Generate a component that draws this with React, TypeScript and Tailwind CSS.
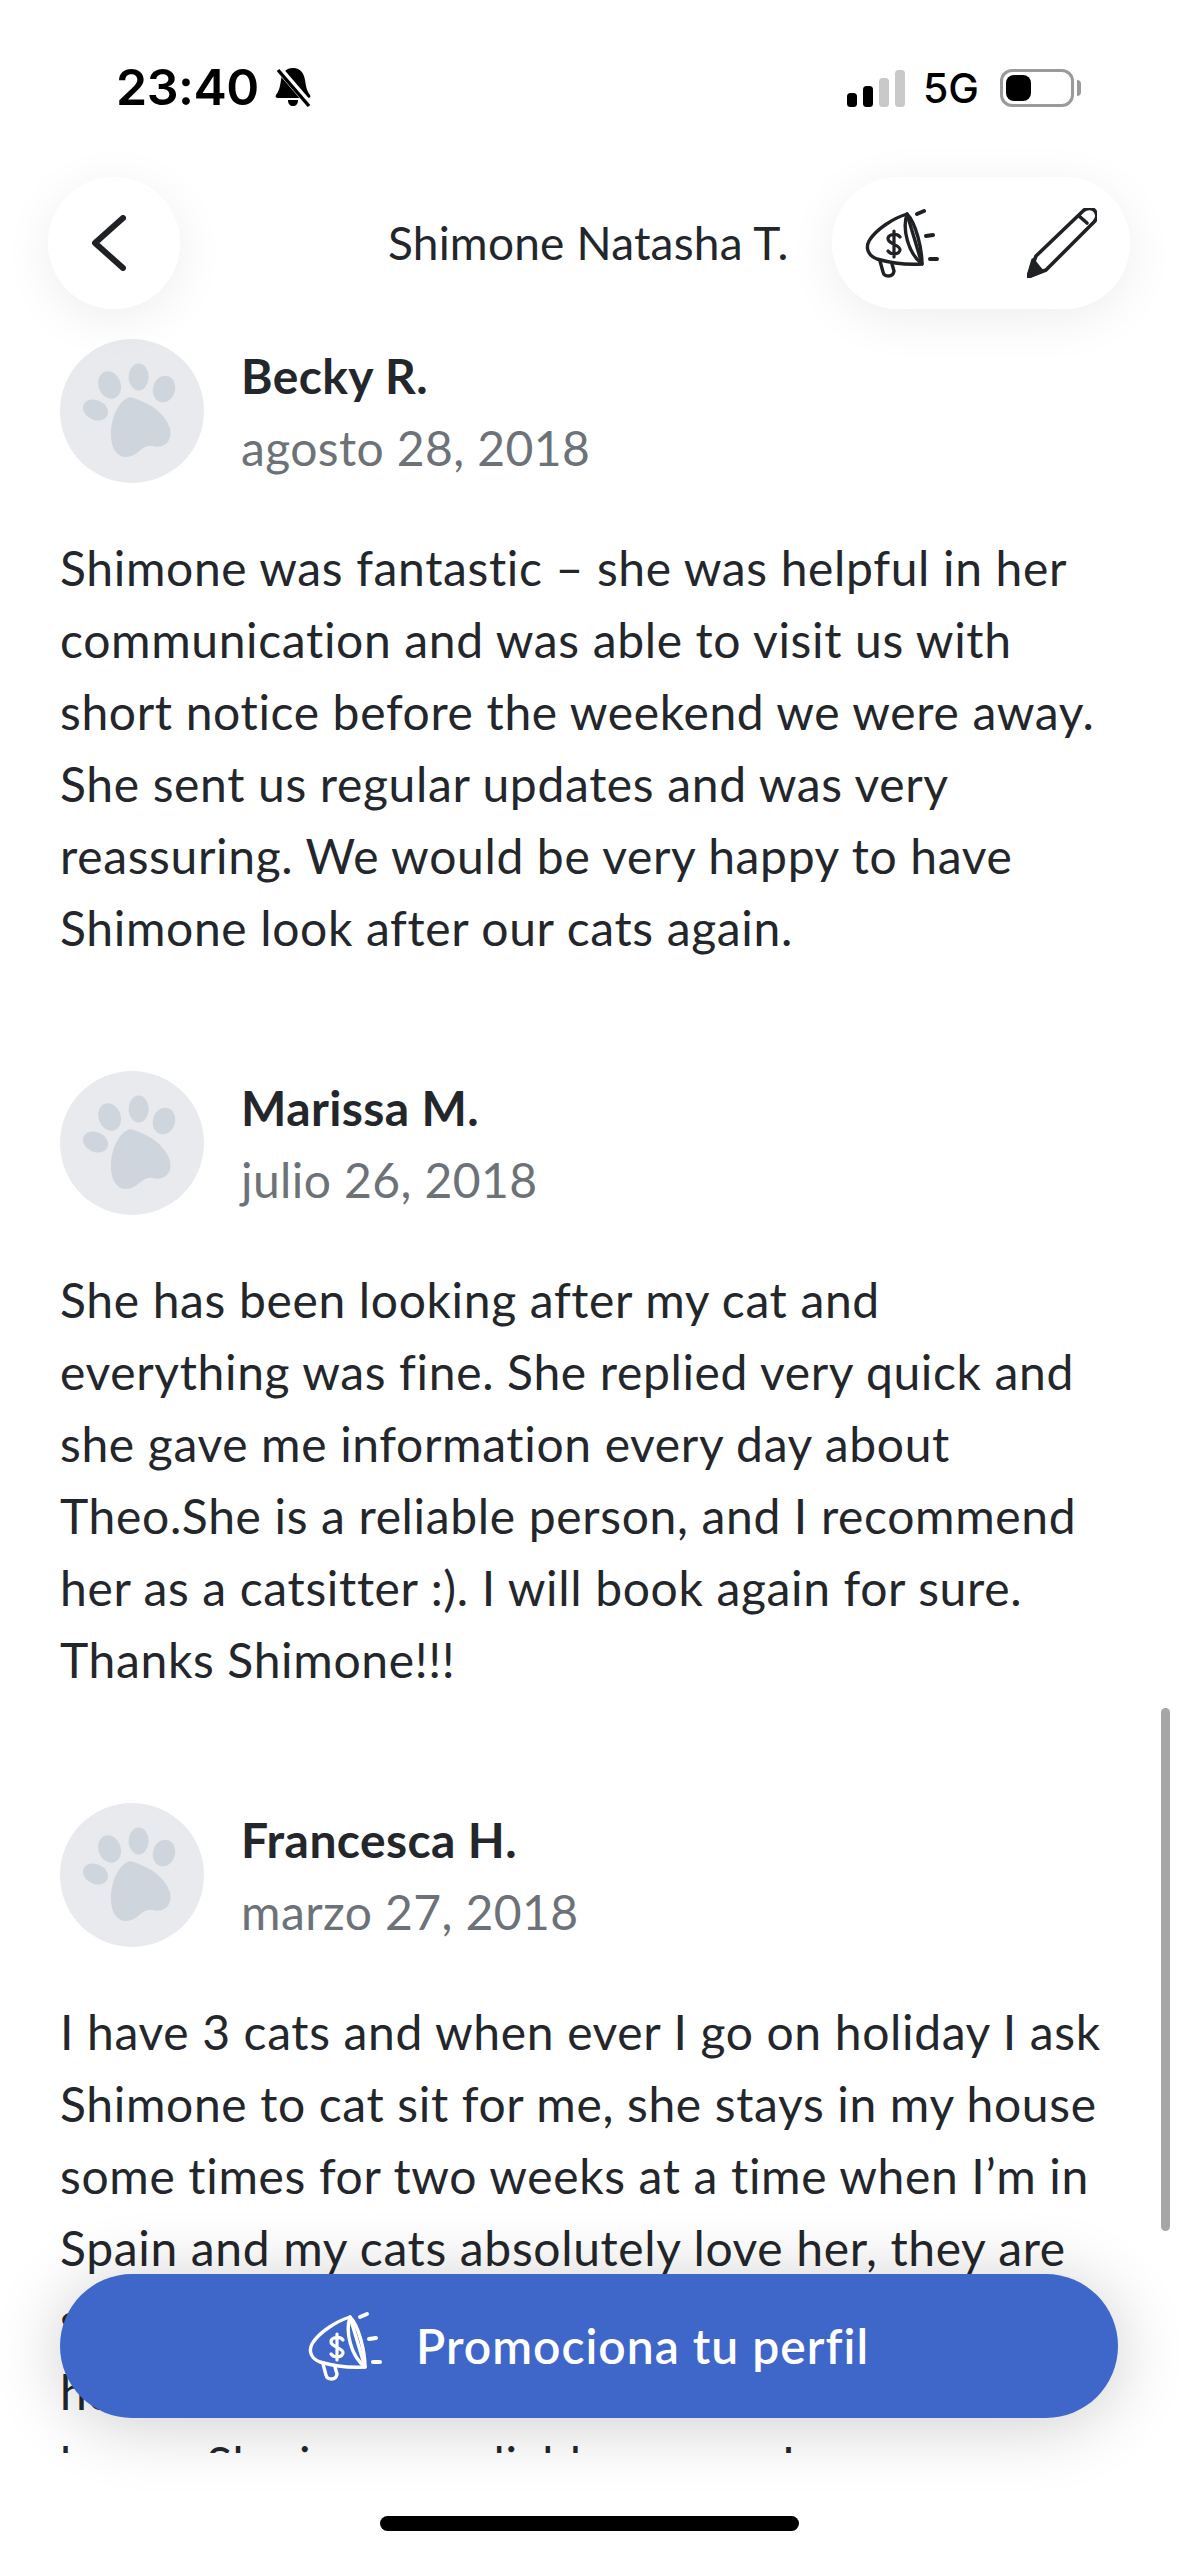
const reviews = [
  {
    name: "Becky R.",
    date: "agosto 28, 2018",
    lines: [
      "Shimone was fantastic – she was helpful in her",
      "communication and was able to visit us with",
      "short notice before the weekend we were away.",
      "She sent us regular updates and was very",
      "reassuring. We would be very happy to have",
      "Shimone look after our cats again.",
    ],
  },
  {
    name: "Marissa M.",
    date: "julio 26, 2018",
    lines: [
      "She has been looking after my cat and",
      "everything was fine. She replied very quick and",
      "she gave me information every day about",
      "Theo.She is a reliable person, and I recommend",
      "her as a catsitter :). I will book again for sure.",
      "Thanks Shimone!!!",
    ],
  },
  {
    name: "Francesca H.",
    date: "marzo 27, 2018",
    lines: [
      "I have 3 cats and when ever I go on holiday I ask",
      "Shimone to cat sit for me, she stays in my house",
      "some times for two weeks at a time when I’m in",
      "Spain and my cats absolutely love her, they are",
      "so happy when she is with them, and she keeps",
      "house clean and tidy, and she always sends",
      "home. She is very reliable person I",
    ],
  },
];

function Paw() {
  return (
    <svg viewBox="0 0 144 144" className="h-[144px] w-[144px]" fill="#ced5dd">
      <ellipse cx="35.5" cy="71" rx="13" ry="10" transform="rotate(25 35.5 71)" />
      <ellipse cx="49.6" cy="46" rx="11" ry="14" transform="rotate(-20 49.6 46)" />
      <ellipse cx="78.7" cy="38" rx="10" ry="13.5" />
      <ellipse cx="104" cy="50" rx="11" ry="13.5" transform="rotate(15 104 50)" />
      <path d="M70 58C85 62 105 72 110 90C113 104 102 110 92 107C82 105 78 118 66 118C55 118 50 105 51 92C52 78 58 62 70 58Z" />
    </svg>
  );
}

function Megaphone({ className }: { className: string }) {
  return (
    <svg viewBox="0 0 72 68" className={className} fill="none" stroke="currentColor" strokeWidth="3.4" strokeLinecap="round" strokeLinejoin="round">
      <path d="M41 5C28 9 10 20 3 32C-1 40 3 47 11 50C25 54 42 56 56 55L41 5Z" />
      <path d="M41 5C36 20 42 44 56 55C56 40 50 14 41 5Z" />
      <path d="M14 52L17 63C18 68 27 69 28 62L26 55" />
      <path d="M51 5L58 2M60 27L67 26M64 50H71" strokeWidth="4" />
      <path d="M34 28C31 24 23 25 22 29C21 35 35 36 34 41C33 46 25 46 22 42M28 22V48" strokeWidth="3.2" />
    </svg>
  );
}

function StatusBar() {
  return (
    <div className="flex h-[177px] items-start justify-between pt-[57px] pr-[98px] pl-[116px] text-black">
      <div className="flex items-center gap-[14px] font-['Inter',sans-serif]">
        <span className="text-[50px] leading-[60px] font-semibold tracking-[-0.5px]">23:40</span>
        <svg viewBox="0 0 40 40" className="h-[40px] w-[40px]" fill="#000">
          <path d="M20 1C12 1 9 7 8 13C7 20 6 24 3 28C2 30 3 31 5 31H35C37 31 38 30 37 28C34 24 33 20 32 13C31 7 28 1 20 1Z" />
          <path d="M15 33H25C25 37 23 39 20 39C17 39 15 37 15 33Z" />
          <path d="M6 2L37 38" stroke="#fff" strokeWidth="7" />
          <path d="M5 3L36 39" stroke="#000" strokeWidth="3.4" />
        </svg>
      </div>
      <div className="flex items-center pt-[6px]">
        <svg viewBox="0 0 58 37" className="h-[37px] w-[58px]">
          <rect x="0" y="23" width="10" height="14" rx="3.5" fill="#000" />
          <rect x="16" y="16" width="10" height="21" rx="3.5" fill="#000" />
          <rect x="32" y="8" width="10" height="29" rx="3.5" fill="#c9c9c9" />
          <rect x="48" y="0" width="10" height="37" rx="3.5" fill="#c9c9c9" />
        </svg>
        <span className="ml-[18px] font-['Inter',sans-serif] text-[41px] leading-[50px] font-medium">5G</span>
        <div className="ml-[21px] h-[38px] w-[74px] rounded-[12px] border-[3px] border-[#9a9a9a] p-[3px]">
          <div className="h-full w-[25px] rounded-[8px] bg-black" />
        </div>
        <div className="ml-[3px] h-[16px] w-[4px] rounded-r-full bg-[#9a9a9a]" />
      </div>
    </div>
  );
}

export default function App() {
  return (
    <div className="relative h-[2556px] w-[1179px] overflow-hidden bg-white font-['Lato',sans-serif] text-[#23262b] [font-variant-ligatures:none]">
      {/* Reviews list, clipped above the home bar */}
      <main className="h-[2453px] overflow-hidden px-[60px] pt-[339px]">
        {reviews.map((r) => (
          <article key={r.name} className="mb-[107px]">
            <div className="flex gap-[37px]">
              <div className="h-[144px] w-[144px] shrink-0 rounded-full bg-[#e8eaed]">
                <Paw />
              </div>
              <div className="pt-[9px]">
                <div className="text-[48px] leading-[56px] font-bold tracking-[0.4px]">{r.name}</div>
                <div className="mt-[16px] text-[48px] leading-[56px] tracking-[0.4px] text-[#6d7278]">{r.date}</div>
              </div>
            </div>
            <div className="mt-[49px] text-[48px] leading-[72px] tracking-[0.65px]">
              {r.lines.map((l) => (
                <div key={l} className="whitespace-nowrap">{l}</div>
              ))}
            </div>
          </article>
        ))}
      </main>

      {/* Status bar and top bar float over the list */}
      <header className="absolute inset-x-0 top-0">
        <StatusBar />
        <div className="flex items-center pr-[49px] pl-[48px]">
          <div className="flex h-[132px] w-[132px] items-center justify-center rounded-full bg-white/95 pr-[10px] shadow-[0_10px_50px_rgba(0,0,0,0.07)]">
            <svg viewBox="0 0 34 56" className="h-[56px] w-[34px]" fill="none" stroke="#1f2125" strokeWidth="6" strokeLinecap="round" strokeLinejoin="round">
              <path d="M31 3L3 28L31 53" />
            </svg>
          </div>
          <div className="ml-[208px] text-[46px] leading-[62px] tracking-[0.2px]">Shimone Natasha T.</div>
          <div className="ml-auto flex h-[132px] w-[298px] items-center justify-between rounded-full bg-white/95 pr-[33px] pl-[34px] shadow-[0_10px_50px_rgba(0,0,0,0.07)]">
            <Megaphone className="h-[68px] w-[72px] overflow-visible text-[#1f2125]" />
            <svg viewBox="0 0 70 70" className="h-[70px] w-[70px]" fill="none" stroke="#1f2125" strokeWidth="3.6" strokeLinejoin="round" strokeLinecap="round">
              <path d="M9 48L56 3C60 -1 66 0 68 3C71 7 70 11 67 14L19 62L1 69L9 48Z" />
              <path d="M1 69L6 52C9 56 12 60 15 63Z" fill="#1f2125" />
              <path d="M52 8L60 15" />
            </svg>
          </div>
        </div>
      </header>

      {/* Scroll indicator */}
      <div className="absolute top-[1708px] right-[9px] h-[523px] w-[9px] rounded-full bg-[#a6a6a6]" />

      {/* Promote button and home bar */}
      <footer className="absolute inset-x-0 bottom-0 flex h-[282px] flex-col items-center pr-px">
        <button className="flex h-[144px] w-[1058px] items-center justify-center gap-[35px] rounded-full bg-[#3f66c9] text-white shadow-[0_6px_70px_rgba(0,0,0,0.2)]">
          <Megaphone className="h-[68px] w-[72px] overflow-visible" />
          <span className="text-[48px] font-semibold tracking-[1px]">Promociona tu perfil</span>
        </button>
        <div className="mt-[98px] h-[15px] w-[419px] rounded-full bg-black" />
      </footer>
    </div>
  );
}
